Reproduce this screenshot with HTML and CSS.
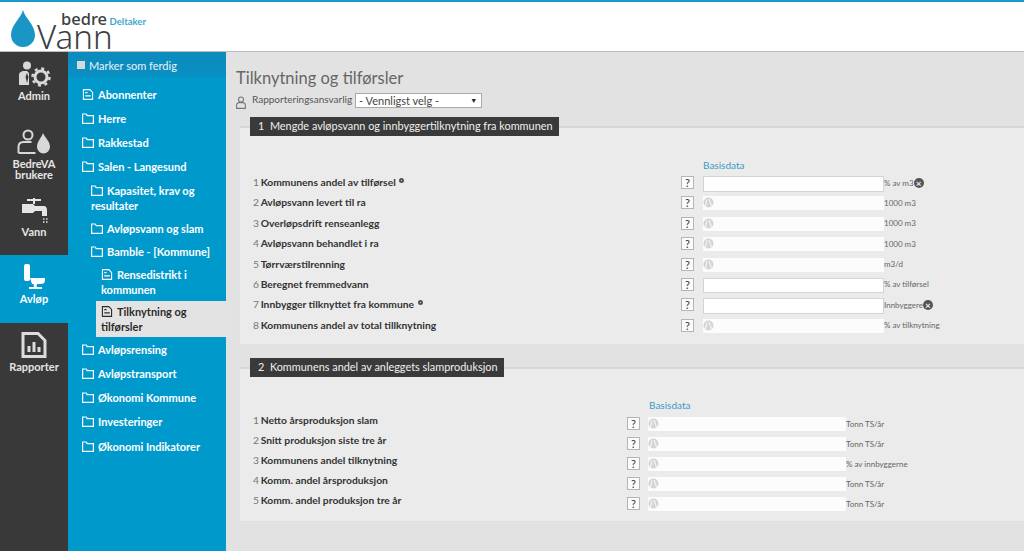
FILE: index.html
```html
<!DOCTYPE html>
<html lang="no">
<head>
<meta charset="utf-8">
<title>Tilknytning og tilførsler</title>
<link rel="stylesheet" href="styles.css">
</head>
<body>
<svg class="defs" width="0" height="0" aria-hidden="true">
  <symbol id="folder" viewBox="0 0 12 11"><path d="M.6 1h3.6l1 1.6h6.2v7.7H.6z" fill="none" stroke="currentColor" stroke-width="1.2"/></symbol>
  <symbol id="doc" viewBox="0 0 12 12"><path d="M1 .7h7l3 3v7.6H1z" fill="none" stroke="currentColor" stroke-width="1.2"/><path d="M3 4h2.5M3 7.5h6" stroke="currentColor" stroke-width="1.3"/></symbol>
  <symbol id="calc" viewBox="0 0 11 13"><circle cx="5.5" cy="6.5" r="5" fill="#d4d4d4"/><path d="M4 3.5L2.5 10M6 3l2.5 7" stroke="#f4f4f4" stroke-width="1.2" fill="none"/></symbol>
</svg>
<header class="top">
  <div class="logo">
    <svg class="drop" viewBox="0 0 24 37"><path d="M12 0C10 8 0 15 0 25a12 12 0 0 0 24 0C24 15 14 8 12 0z" fill="#1a95c4"/></svg>
    <div class="word"><span class="bedre">bedre</span><span class="vann">Vann</span></div>
    <span class="role">Deltaker</span>
  </div>
</header>
<div class="layout">
  <nav class="rail">
    <a class="rail-item">
      <svg class="rail-icon" viewBox="0 0 34 26"><circle cx="10" cy="4.5" r="4" fill="#d8d8d8"/><path d="M2 24V14c0-3 3-4 5-4h3l2 2v12z" fill="#d8d8d8"/><path d="M10 12l-1.500 4 1.500 6 1.500-6z" fill="#3a3a3a"/><circle cx="24" cy="16" r="6" fill="none" stroke="#d8d8d8" stroke-width="3"/><circle cx="24" cy="16" r="8.500" fill="none" stroke="#d8d8d8" stroke-width="2.500" stroke-dasharray="3 3.670"/></svg>
      <span>Admin</span>
    </a>
    <a class="rail-item">
      <svg class="rail-icon" viewBox="0 0 34 26"><circle cx="11" cy="6" r="4.500" fill="none" stroke="#d8d8d8" stroke-width="2"/><path d="M1.500 24v-6c0-4 3-5 5-5h8M1.500 24h17" fill="none" stroke="#d8d8d8" stroke-width="2"/><path d="M26 4c-1.500 5-6 8-6 14a6.500 6.500 0 0 0 13 0c0-6-5-9-7-14z" fill="#d8d8d8"/></svg>
      <span>BedreVA<br>brukere</span>
    </a>
    <a class="rail-item">
      <svg class="rail-icon" viewBox="0 0 34 26"><path d="M10 3h14M17 1v6" stroke="#e4e4e4" stroke-width="2"/><path d="M5 7h11l2 2h9c2 0 3 2 3 4v6h-5v-5H18l-2 2H5z" fill="#e4e4e4"/><path d="M26 22h1.500M29 22h1.500M26 25h1.500M29 25h1.500" stroke="#e4e4e4" stroke-width="1.500"/></svg>
      <span>Vann</span>
    </a>
    <a class="rail-item active">
      <svg class="rail-icon" viewBox="0 0 34 26"><rect x="7" y="0" width="6" height="17" rx="2" fill="#fff"/><path d="M13 14h15v2c0 3-2 4-4 4h-4l-.500 3H25v2H12v-2h5l-.500-3H15z" fill="#fff"/></svg>
      <span>Avløp</span>
    </a>
    <a class="rail-item">
      <svg class="rail-icon" viewBox="0 0 34 26"><path d="M6 1.500h15l7 7v16H6z" fill="none" stroke="#dcdcdc" stroke-width="3"/><path d="M12 14v6M17 10v10M22 15v5" stroke="#dcdcdc" stroke-width="3"/></svg>
      <span>Rapporter</span>
    </a>
  </nav>
  <aside class="tree">
    <div class="mark"><i class="check"></i>Marker som ferdig</div>
    <a class="node"><svg class="ico"><use href="#doc"/></svg>Abonnenter</a>
    <a class="node"><svg class="ico"><use href="#folder"/></svg>Herre</a>
    <a class="node"><svg class="ico"><use href="#folder"/></svg>Rakkestad</a>
    <a class="node"><svg class="ico"><use href="#folder"/></svg>Salen - Langesund</a>
    <a class="node l2"><svg class="ico"><use href="#folder"/></svg>Kapasitet, krav og resultater</a>
    <a class="node l2"><svg class="ico"><use href="#folder"/></svg>Avløpsvann og slam</a>
    <a class="node l2"><svg class="ico"><use href="#folder"/></svg>Bamble - [Kommune]</a>
    <a class="node l3"><svg class="ico"><use href="#doc"/></svg>Rensedistrikt i kommunen</a>
    <a class="node l3 current"><svg class="ico"><use href="#doc"/></svg>Tilknytning og tilførsler</a>
    <a class="node"><svg class="ico"><use href="#folder"/></svg>Avløpsrensing</a>
    <a class="node"><svg class="ico"><use href="#folder"/></svg>Avløpstransport</a>
    <a class="node"><svg class="ico"><use href="#folder"/></svg>Økonomi Kommune</a>
    <a class="node"><svg class="ico"><use href="#folder"/></svg>Investeringer</a>
    <a class="node"><svg class="ico"><use href="#folder"/></svg>Økonomi Indikatorer</a>
  </aside>
  <main class="main">
    <h1>Tilknytning og tilførsler</h1>
    <div class="owner">
      <svg class="owner-icon" viewBox="0 0 10 13"><circle cx="5" cy="3.500" r="2.500" fill="none" stroke="#777" stroke-width="1.100"/><path d="M.6 12.400V9c0-1.500 1.500-2.400 2.500-2.400h3.800c1 0 2.500.9 2.500 2.400v3.400z" fill="none" stroke="#777" stroke-width="1.100"/></svg>
      <span class="owner-label">Rapporteringsansvarlig</span>
      <div class="select">- Vennligst velg -<span class="caret">▼</span></div>
    </div>

    <section class="panel one">
      <h2>1&nbsp; Mengde avløpsvann og innbyggertilknytning fra kommunen</h2>
      <div class="basis">Basisdata</div>
      <div class="row"><div class="label"><span class="n">1</span> <b>Kommunens andel av tilførsel</b> <i class="dot"></i></div><span class="q">?</span><div class="field edit"></div><div class="unit">% av m3<i class="x">×</i></div></div>
      <div class="row"><div class="label"><span class="n">2</span> <b>Avløpsvann levert til ra</b></div><span class="q">?</span><div class="field"><svg class="calc"><use href="#calc"/></svg></div><div class="unit">1000 m3</div></div>
      <div class="row"><div class="label"><span class="n">3</span> <b>Overløpsdrift renseanlegg</b></div><span class="q">?</span><div class="field"><svg class="calc"><use href="#calc"/></svg></div><div class="unit">1000 m3</div></div>
      <div class="row"><div class="label"><span class="n">4</span> <b>Avløpsvann behandlet i ra</b></div><span class="q">?</span><div class="field"><svg class="calc"><use href="#calc"/></svg></div><div class="unit">1000 m3</div></div>
      <div class="row"><div class="label"><span class="n">5</span> <b>Tørrværstilrenning</b></div><span class="q">?</span><div class="field"><svg class="calc"><use href="#calc"/></svg></div><div class="unit">m3/d</div></div>
      <div class="row"><div class="label"><span class="n">6</span> <b>Beregnet fremmedvann</b></div><span class="q">?</span><div class="field edit"></div><div class="unit">% av tilførsel</div></div>
      <div class="row"><div class="label"><span class="n">7</span> <b>Innbygger tilknyttet fra kommune</b> <i class="dot"></i></div><span class="q">?</span><div class="field edit"></div><div class="unit">Innbyggere<i class="x">×</i></div></div>
      <div class="row"><div class="label"><span class="n">8</span> <b>Kommunens andel av total tillknytning</b></div><span class="q">?</span><div class="field"><svg class="calc"><use href="#calc"/></svg></div><div class="unit">% av tilknytning</div></div>
    </section>

    <section class="panel two">
      <h2>2&nbsp; Kommunens andel av anleggets slamproduksjon</h2>
      <div class="basis">Basisdata</div>
      <div class="row"><div class="label"><span class="n">1</span> <b>Netto årsproduksjon slam</b></div><span class="q">?</span><div class="field"><svg class="calc"><use href="#calc"/></svg></div><div class="unit">Tonn TS/år</div></div>
      <div class="row"><div class="label"><span class="n">2</span> <b>Snitt produksjon siste tre år</b></div><span class="q">?</span><div class="field"><svg class="calc"><use href="#calc"/></svg></div><div class="unit">Tonn TS/år</div></div>
      <div class="row"><div class="label"><span class="n">3</span> <b>Kommunens andel tilknytning</b></div><span class="q">?</span><div class="field"><svg class="calc"><use href="#calc"/></svg></div><div class="unit">% av innbyggerne</div></div>
      <div class="row"><div class="label"><span class="n">4</span> <b>Komm. andel årsproduksjon</b></div><span class="q">?</span><div class="field"><svg class="calc"><use href="#calc"/></svg></div><div class="unit">Tonn TS/år</div></div>
      <div class="row"><div class="label"><span class="n">5</span> <b>Komm. andel produksjon tre år</b></div><span class="q">?</span><div class="field"><svg class="calc"><use href="#calc"/></svg></div><div class="unit">Tonn TS/år</div></div>
    </section>
  </main>
</div>
</body>
</html>
```

FILE: styles.css
```css
* { box-sizing: border-box; }
html, body { margin: 0; height: 100%; overflow: hidden; }
body { font-family: Lato, "Noto Sans", sans-serif; background: #e2e2e2; color: #3a3a3a; }
a { color: inherit; text-decoration: none; }
.defs { position: absolute; }

.top { height: 52px; background: #fff; border-top: 2px solid #1a9bcb; border-bottom: 1px solid #bdbdbd; }
.logo { display: flex; align-items: flex-start; padding: 8px 0 0 11px; }
.drop { width: 24px; height: 37px; flex: none; }
.word { display: flex; flex-direction: column; margin: 0 -5px 0 2px; color: #3c3f42; font-family: "Noto Sans", sans-serif; }
.bedre { font-size: 16.500px; line-height: 10px; margin: 4px 0 0 24px; font-weight: 500; }
.vann { font-size: 33px; line-height: 25px; font-weight: 300; }
.role { font-size: 9.500px; font-weight: 700; color: #3fa6cc; margin: 6px 0 0 2px; }

.layout { display: flex; height: 499px; }
.rail { width: 68px; flex: none; background: #3a3939; }
.rail-item { display: flex; flex-direction: column; align-items: center; height: 67.800px; padding-top: 9px; color: #e6e6e6; font-size: 11px; line-height: 11px; font-weight: 700; text-align: center; }
.rail-icon { width: 34px; height: 26px; margin-bottom: 3px; }
.rail-item.active { background: #0099cc; color: #fff; }

.tree { width: 158px; flex: none; background: #0099cc; color: #fff; font-size: 11px; line-height: 15px; font-weight: 700; }
.mark { display: flex; align-items: center; height: 25px; margin-bottom: 5px; padding: 1px 0 0 9px; background: linear-gradient(#0c8bbd, #0a8fc2); font-size: 11px; font-weight: 400; color: #e8f4fa; }
.check { width: 8px; height: 8px; margin-right: 4px; background: #d8d8d8; }
.node { display: block; padding: 4.600px 4px 4.600px 14px; }
.ico { width: 12px; height: 11px; margin-right: 4px; vertical-align: -1px; }
.l2, .l3 { padding-top: 4px; padding-bottom: 4px; }
.l2 { padding-left: 23px; }
.l3 { margin-left: 28px; padding-left: 5px; }
.current { background: #e3e3e3; color: #2b2b2b; padding-top: 3px; padding-bottom: 3px; margin-top: .500px; }

.main { flex: 1; min-width: 0; padding: 16px 0 0 10px; }
h1 { margin: 0; font-size: 16.500px; line-height: 20px; font-weight: 400; color: #666; }
.owner { display: flex; align-items: flex-start; height: 24px; margin-top: 5px; }
.owner-icon { width: 10px; height: 13px; margin-top: 3px; flex: none; }
.owner-label { margin: 0 3px 0 6px; font-size: 10px; line-height: 12px; color: #555; }
.select { display: flex; justify-content: space-between; width: 127px; height: 15px; padding: 0 4px 0 3px; background: #fff; border: 1px solid #aaa; font-size: 11px; line-height: 13px; color: #444; }
.caret { font-size: 7px; color: #222; }

.panel { margin: 0 0 23px 4px; background: #ebebeb; border-top: 2px solid #d6d6d6; }
.panel.one { height: 218px; margin-top: 9px; }
.panel.two { height: 154px; }
h2 { display: inline-block; height: 19px; margin: -11px 0 0 10px; padding: 0 6px 0 8px; background: #3a3a3a; color: #f0f0f0; font-size: 10.900px; line-height: 18px; font-weight: 400; vertical-align: top; }
.basis { font-size: 10px; line-height: 12px; color: #3b9ac4; }
.row { display: grid; align-items: start; font-size: 10.300px; line-height: 13px; }
.one .row { height: 20.400px; grid-template-columns: 441px 22px 181px auto; }
.two .row { height: 20px; grid-template-columns: 387px 21px 198px auto; }
.one .basis { margin: 12px 0 5px 463px; }
.two .basis { margin: 11px 0 6px 409px; }
.label { margin-top: -1px; padding: 1px 0 0 13px; color: #333; white-space: nowrap; }
.two .label { margin-top: -4px; }
.n { margin-right: -1px; color: #777; font-weight: 400; }
.label b { font-weight: 700; }
.dot { display: inline-block; width: 5px; height: 5px; margin-left: 1px; vertical-align: 3px; border-radius: 50%; border: 2px solid #555; }
.q { width: 13px; height: 13px; background: #fbfbfb; border: 1px solid #b5b5b5; font-size: 11px; line-height: 11px; text-align: center; color: #333; }
.field { height: 14px; background: #fcfcfc; display: flex; }
.field.edit { height: 15.500px; background: #fff; border: 1px solid #d4d4d4; }
.calc { width: 11px; height: 13px; }
.unit { display: flex; align-items: center; height: 14px; font-size: 8px; color: #666; white-space: nowrap; }
.x { display: inline-block; width: 10px; height: 10px; border-radius: 50%; background: #555; color: #eee; font-size: 10px; line-height: 10px; font-style: normal; text-align: center; font-weight: 700; }
```
